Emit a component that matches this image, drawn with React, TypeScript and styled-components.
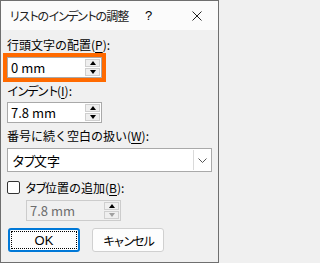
import React from 'react'
import { styled, createGlobalStyle } from 'styled-components'

const GlobalStyle = createGlobalStyle`
  html, body {
    margin: 0;
    padding: 0;
    background: #f0f0f0;
  }
  * {
    box-sizing: border-box;
  }
`

const FONT = `"Noto Sans CJK JP", "Liberation Sans", sans-serif`

const SpinBox = ({ value, disabled }: { value: string; disabled?: boolean }) => (
  <Field $disabled={disabled}>
    <FieldText $disabled={disabled}>{value}</FieldText>
    <Spinner>
      <SpinButton>
        <Arrow $up />
      </SpinButton>
      <SpinButton>
        <Arrow $dim={disabled} />
      </SpinButton>
    </Spinner>
  </Field>
)

const App = () => {
  return (
    <>
      <GlobalStyle />
      <Dialog>
        <TitleBar>
          <Title>
            <Kana $tight>リスト</Kana>の<Kana $tight>インデント</Kana>の調整
          </Title>
          <Help>?</Help>
          <Close>
            <svg width="10" height="10" viewBox="0 0 10 10">
              <path d="M0.5 0.5 L9.5 9.5 M9.5 0.5 L0.5 9.5" stroke="#222" strokeWidth="1" />
            </svg>
          </Close>
        </TitleBar>
        <Body>
          <Label $top={7}>
            行頭文字の配置(<u>P</u>):
          </Label>
          <Highlight>
            <SpinBox value="0 mm" />
          </Highlight>
          <Label $top={1}>
            <Kana>インデント</Kana>(<u>I</u>):
          </Label>
          <Spaced $top={3}>
            <SpinBox value="7.8 mm" />
          </Spaced>
          <Label $top={5}>
            番号に続く空白の扱い(<u>W</u>):
          </Label>
          <Combo>
            <FieldText>
              <Kana>タブ</Kana>文字
            </FieldText>
            <DropButton>
              <svg width="9" height="5" viewBox="0 0 9 5">
                <path d="M0.5 0.5 L4.5 4.5 L8.5 0.5" stroke="#555" strokeWidth="1" fill="none" />
              </svg>
            </DropButton>
          </Combo>
          <CheckRow>
            <CheckBox />
            <span>
              <Kana>タブ</Kana>位置の追加(<u>B</u>):
            </span>
          </CheckRow>
          <Indented>
            <SpinBox value="7.8 mm" disabled />
          </Indented>
          <ButtonRow>
            <Button $primary>
              <Focus>OK</Focus>
            </Button>
            <Button>
              <Kana>キャンセル</Kana>
            </Button>
          </ButtonRow>
        </Body>
      </Dialog>
    </>
  )
}

export default App

const Dialog = styled.div`
  width: 219px;
  height: 263px;
  border: 1px solid #6f6f6f;
  background: #f0f0f0;
  display: flex;
  flex-direction: column;
  font-family: ${FONT};
  font-size: 12px;
  color: #000;
`

const Kana = styled.span<{ $tight?: boolean }>`
  letter-spacing: ${p => (p.$tight ? '-2.6px' : '-2px')};
`

const TitleBar = styled.div`
  height: 29px;
  background: #fbfbfb;
  display: flex;
  align-items: center;
  padding-left: 8px;
`

const Title = styled.div`
  flex: 1;
  font-size: 12px;
  color: #222;
  white-space: nowrap;
  letter-spacing: -1px;
`

const Help = styled.div`
  width: 12px;
  font-family: "Liberation Sans", sans-serif;
  font-size: 13px;
  margin-right: 35px;
`

const Close = styled.div`
  width: 10px;
  display: flex;
  margin-right: 16px;
`

const Body = styled.div`
  display: flex;
  flex-direction: column;
  align-items: flex-start;
  padding: 0 6px;
`

const Label = styled.div<{ $top: number }>`
  margin-top: ${p => p.$top}px;
  line-height: 16px;
  height: 16px;
  white-space: nowrap;

  u {
    text-underline-offset: 2px;
  }
`

const Highlight = styled.div`
  margin-left: -4px;
  border: 4px solid #ff6a00;
`

const Spaced = styled.div<{ $top: number }>`
  margin-top: ${p => p.$top}px;
`

const Field = styled.div<{ $disabled?: boolean }>`
  width: 95px;
  height: 21px;
  border: 1px solid ${p => (p.$disabled ? '#cccccc' : '#a9a9a9')};
  background: ${p => (p.$disabled ? '#f0f0f0' : '#fff')};
  display: flex;
  align-items: center;
  padding: 1px 1px 1px 3px;
`

const FieldText = styled.div<{ $disabled?: boolean }>`
  flex: 1;
  font-family: ${FONT};
  font-size: 13px;
  color: ${p => (p.$disabled ? '#6d6d6d' : '#000')};
  white-space: nowrap;
`

const Spinner = styled.div`
  width: 15px;
  height: 100%;
  display: flex;
  flex-direction: column;
  gap: 1px;
`

const SpinButton = styled.div`
  flex: 1;
  background: #efefef;
  border: 1px solid #cfcfcf;
  display: flex;
  align-items: center;
  justify-content: center;
`

const Arrow = styled.div<{ $up?: boolean; $dim?: boolean }>`
  width: 0;
  height: 0;
  border-left: 3px solid transparent;
  border-right: 3px solid transparent;
  ${p =>
    p.$up
      ? `border-bottom: 4px solid #000;`
      : `border-top: 4px solid ${p.$dim ? '#a0a0a0' : '#000'};`}
`

const Combo = styled.div`
  margin-top: 4px;
  width: 205px;
  height: 24px;
  border: 1px solid #a9a9a9;
  background: #fff;
  display: flex;
  align-items: center;
  padding: 1px 1px 1px 4px;
`

const DropButton = styled.div`
  width: 17px;
  height: 100%;
  border-left: 1px solid #dadada;
  display: flex;
  align-items: center;
  justify-content: center;
`

const CheckRow = styled.div`
  margin-top: 7px;
  height: 16px;
  display: flex;
  align-items: center;
  gap: 5px;
  white-space: nowrap;

  u {
    text-underline-offset: 2px;
  }
`

const CheckBox = styled.div`
  width: 13px;
  height: 13px;
  border: 1px solid #333;
  border-radius: 2px;
  background: #fff;
`

const Indented = styled.div`
  margin-top: 5px;
  margin-left: 19px;
`

const ButtonRow = styled.div`
  margin-top: 7px;
  margin-left: 1px;
  display: flex;
  gap: 12px;
`

const Button = styled.div<{ $primary?: boolean }>`
  width: 72px;
  height: 24px;
  border-radius: 3px;
  background: #fdfdfd;
  border: ${p => (p.$primary ? '2px solid #0078d7' : '1px solid #d0d0d0')};
  display: flex;
  align-items: center;
  justify-content: center;
  padding: 1px;
  font-size: 12px;
`

const Focus = styled.div`
  width: 100%;
  height: 100%;
  border: 1px dotted #000;
  display: flex;
  align-items: center;
  justify-content: center;
  font-family: "Liberation Sans", sans-serif;
  font-size: 13px;
`
